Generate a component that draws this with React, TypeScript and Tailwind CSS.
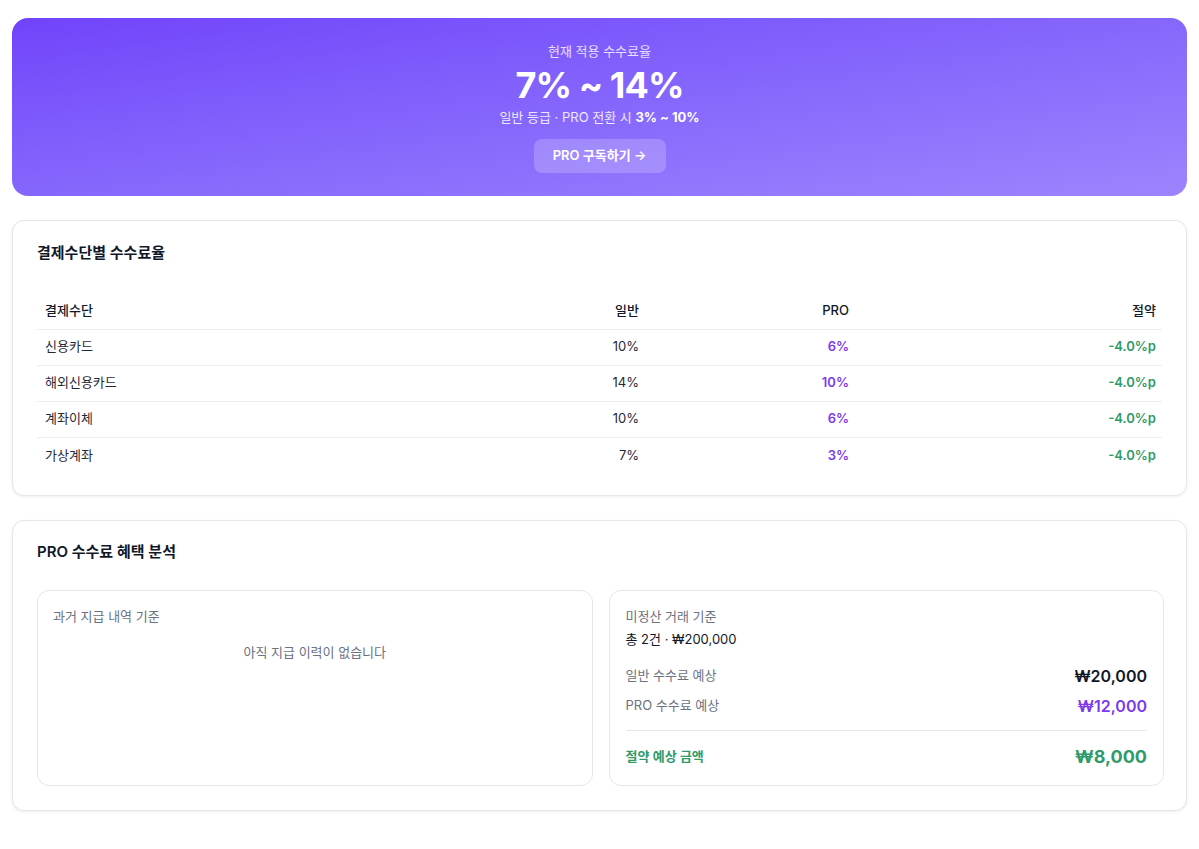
const rows = [
  { name: "신용카드", normal: "10%", pro: "6%", save: "-4.0%p" },
  { name: "해외신용카드", normal: "14%", pro: "10%", save: "-4.0%p" },
  { name: "계좌이체", normal: "10%", pro: "6%", save: "-4.0%p" },
  { name: "가상계좌", normal: "7%", pro: "3%", save: "-4.0%p" },
];

export default function App() {
  return (
    <div
      className="min-h-screen bg-white px-3 pt-[18px] pb-10 text-[#111827]"
      style={{ fontFamily: 'Inter, "Noto Sans CJK KR", sans-serif' }}
    >
      {/* Current fee hero */}
      <section className="flex flex-col items-center rounded-2xl bg-gradient-to-br from-[#7143fa] to-[#9d84fd] px-6 pt-[23px] pb-[23px] text-white">
        <div className="text-[13px] leading-5 text-white/80">현재 적용 수수료율</div>
        <div className="mt-1 text-[36px] font-bold leading-[40px] tracking-tight">7% ~ 14%</div>
        <div className="mt-0.5 text-[13px] leading-5 text-white/85">
          일반 등급 · PRO 전환 시 <span className="font-bold text-white">3% ~ 10%</span>
        </div>
        <button className="mt-3 h-[34px] w-[132px] rounded-lg bg-white/20 text-[13px] font-semibold text-white">
          PRO 구독하기 →
        </button>
      </section>

      {/* Fee by payment method */}
      <section className="mt-6 rounded-xl border border-[#e5e7eb] bg-white px-6 pt-[23px] pb-[22px] shadow-[0_1px_3px_rgba(0,0,0,0.08)]">
        <h2 className="text-[15px] font-semibold leading-[18px]">결제수단별 수수료율</h2>
        <table className="mt-[31px] w-full text-[13px]">
          <thead>
            <tr className="border-b border-[#eceef1]">
              <th className="h-9 px-2 text-left font-medium">결제수단</th>
              <th className="h-9 px-2 text-right font-medium">일반</th>
              <th className="h-9 w-[210px] px-2 text-right font-medium">PRO</th>
              <th className="h-9 w-[305px] pl-2 pr-1.5 text-right font-medium">절약</th>
            </tr>
          </thead>
          <tbody>
            {rows.map((r, i) => (
              <tr key={r.name} className={i < rows.length - 1 ? "border-b border-[#eceef1]" : ""}>
                <td className="h-9 px-2 text-[#1f2937]">{r.name}</td>
                <td className="h-9 px-2 text-right text-[#1f2937]">{r.normal}</td>
                <td className="h-9 px-2 text-right font-semibold text-[#7c3aed]">{r.pro}</td>
                <td className="h-9 pl-2 pr-1.5 text-right font-semibold text-[#2f9a6a]">{r.save}</td>
              </tr>
            ))}
          </tbody>
        </table>
      </section>

      {/* PRO benefit analysis */}
      <section className="mt-6 rounded-xl border border-[#e5e7eb] bg-white pl-6 pr-[22px] pt-[22px] pb-6 shadow-[0_1px_3px_rgba(0,0,0,0.08)]">
        <h2 className="text-[15px] font-semibold leading-[18px]">PRO 수수료 혜택 분석</h2>
        <div className="mt-[29px] grid grid-cols-2 gap-4">
          <div className="h-[196px] rounded-xl border border-[#e5e7eb] px-[15px] pt-[15px]">
            <div className="text-[13px] leading-5 text-[#6b7280]">과거 지급 내역 기준</div>
            <div className="mt-4 text-center text-[13px] leading-5 text-[#6b7280]">아직 지급 이력이 없습니다</div>
          </div>
          <div className="h-[196px] rounded-xl border border-[#e5e7eb] px-4 pt-[15px]">
            <div className="text-[13px] leading-5 text-[#6b7280]">미정산 거래 기준</div>
            <div className="mt-[3px] text-[13px] leading-5 text-[#111827]">총 2건 · ₩200,000</div>
            <div className="mt-[15px] flex items-center justify-between">
              <span className="text-[13px] text-[#6b7280]">일반 수수료 예상</span>
              <span className="text-[16px] font-semibold text-[#111827]">₩20,000</span>
            </div>
            <div className="mt-[6px] flex items-center justify-between">
              <span className="text-[13px] text-[#6b7280]">PRO 수수료 예상</span>
              <span className="text-[16px] font-semibold text-[#7c3aed]">₩12,000</span>
            </div>
            <div className="mt-3 border-t border-[#e5e7eb] pt-3">
              <div className="flex items-center justify-between">
                <span className="text-[13px] font-semibold text-[#2f9a6a]">절약 예상 금액</span>
                <span className="text-[18px] font-bold text-[#2f9a6a]">₩8,000</span>
              </div>
            </div>
          </div>
        </div>
      </section>
    </div>
  );
}
